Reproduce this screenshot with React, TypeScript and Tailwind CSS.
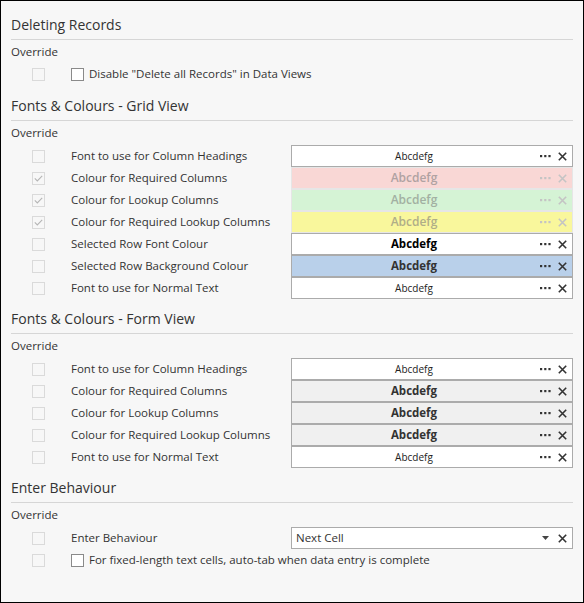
import React from "react";

const FONT = { fontFamily: '"Segoe UI", "Open Sans", "Noto Sans", sans-serif' };

function Check({ checked = false, enabled = false }: { checked?: boolean; enabled?: boolean }) {
  return (
    <div
      className={
        "w-[13px] h-[13px] shrink-0 border flex items-center justify-center " +
        (enabled ? "border-[#8a8a8a] bg-white" : "border-[#dadada] bg-[#f7f7f7]")
      }
    >
      {checked && (
        <svg width="9" height="7" viewBox="0 0 9 7">
          <path d="M0.8 3.4 L3.3 5.9 L8.2 0.8" fill="none" stroke="#b5b5b5" strokeWidth="1.1" />
        </svg>
      )}
    </div>
  );
}

function Dots({ faded }: { faded?: boolean }) {
  const c = faded ? "#c4c4c4" : "#333";
  return (
    <svg width="11" height="3" viewBox="0 0 11 3">
      <rect x="0" y="0" width="2.2" height="2.2" fill={c} />
      <rect x="4.2" y="0" width="2.2" height="2.2" fill={c} />
      <rect x="8.4" y="0" width="2.2" height="2.2" fill={c} />
    </svg>
  );
}

function XIcon({ faded }: { faded?: boolean }) {
  const c = faded ? "#c4c4c4" : "#333";
  return (
    <svg width="9" height="9" viewBox="0 0 9 9">
      <path d="M0.8 0.8 L8.2 8.2 M8.2 0.8 L0.8 8.2" stroke={c} strokeWidth="1.6" fill="none" />
    </svg>
  );
}

type Box = {
  bg: string;
  border: string;
  text: string;
  kind: "small" | "bold" | "faded";
  faded?: boolean;
};

function ValueBox({ b }: { b: Box }) {
  const textCls =
    b.kind === "small"
      ? "text-[10px] text-[#222]"
      : b.kind === "bold"
      ? "text-[11.5px] font-bold " + b.text
      : "text-[12px] font-semibold " + b.text;
  return (
    <div className={"flex-1 h-[22px] border flex items-center " + b.bg + " " + b.border}>
      <div className={"flex-1 text-center leading-none " + textCls} style={{ fontFamily: '"Segoe UI", "Open Sans", sans-serif' }}>
        Abcdefg
      </div>
      <div className="flex items-center gap-[7px] pr-[5px] pl-[4px]">
        <Dots faded={b.faded} />
        <XIcon faded={b.faded} />
      </div>
    </div>
  );
}

function Row({ label, checked, box }: { label: string; checked?: boolean; box: Box }) {
  return (
    <div className="flex items-center h-[22px]">
      <div className="w-[60px] pl-[21px] shrink-0">
        <Check checked={checked} />
      </div>
      <div className="w-[220px] shrink-0 text-[11.5px] text-[#333] leading-none">{label}</div>
      <ValueBox b={box} />
    </div>
  );
}

function Header({ title }: { title: string }) {
  return (
    <>
      <div className="text-[14px] text-[#333] h-[20px] leading-[20px]">{title}</div>
      <div className="h-px bg-[#d6d6d6] mt-[4px]" />
      <div className="text-[11.5px] text-[#333] h-[16px] leading-[16px] mt-[4px]">Override</div>
    </>
  );
}

const white: Box = { bg: "bg-white", border: "border-[#ababab]", text: "", kind: "small" };
const whiteBold: Box = { bg: "bg-white", border: "border-[#ababab]", text: "text-black", kind: "bold" };
const blueBold: Box = { bg: "bg-[#b9d0ea]", border: "border-[#ababab]", text: "text-[#333]", kind: "bold" };
const grayBold: Box = { bg: "bg-[#f0f0f0]", border: "border-[#ababab]", text: "text-[#333]", kind: "bold" };
const pink: Box = { bg: "bg-[#f9d7d5]", border: "border-[#e6e6e6]", text: "text-[#b0a2a2]", kind: "faded", faded: true };
const green: Box = { bg: "bg-[#d5f3d5]", border: "border-[#e6e6e6]", text: "text-[#a2b0a2]", kind: "faded", faded: true };
const yellow: Box = { bg: "bg-[#f9f79c]", border: "border-[#e6e6e6]", text: "text-[#b0ae88]", kind: "faded", faded: true };

export default function App() {
  return (
    <div className="w-[584px] h-[603px] border border-black bg-[#f7f7f7] px-[10px] pt-[14px] overflow-hidden" style={FONT}>
      {/* Deleting Records */}
      <Header title="Deleting Records" />
      <div className="flex items-center h-[22px] mt-[3px]">
        <div className="w-[60px] pl-[21px] shrink-0">
          <Check />
        </div>
        <Check enabled />
        <div className="ml-[5px] text-[11.5px] text-[#333] leading-none">Disable "Delete all Records" in Data Views</div>
      </div>

      {/* Grid View */}
      <div className="mt-[11px]">
        <Header title="Fonts & Colours - Grid View" />
        <div className="mt-[4px]">
          <Row label="Font to use for Column Headings" box={white} />
          <Row label="Colour for Required Columns" checked box={pink} />
          <Row label="Colour for Lookup Columns" checked box={green} />
          <Row label="Colour for Required Lookup Columns" checked box={yellow} />
          <Row label="Selected Row Font Colour" box={whiteBold} />
          <Row label="Selected Row Background Colour" box={blueBold} />
          <Row label="Font to use for Normal Text" box={white} />
        </div>
      </div>

      {/* Form View */}
      <div className="mt-[10px]">
        <Header title="Fonts & Colours - Form View" />
        <div className="mt-[4px]">
          <Row label="Font to use for Column Headings" box={white} />
          <Row label="Colour for Required Columns" box={grayBold} />
          <Row label="Colour for Lookup Columns" box={grayBold} />
          <Row label="Colour for Required Lookup Columns" box={grayBold} />
          <Row label="Font to use for Normal Text" box={white} />
        </div>
      </div>

      {/* Enter Behaviour */}
      <div className="mt-[10px]">
        <Header title="Enter Behaviour" />
        <div className="mt-[4px]">
          <div className="flex items-center h-[22px]">
            <div className="w-[60px] pl-[21px] shrink-0">
              <Check />
            </div>
            <div className="w-[220px] shrink-0 text-[11.5px] text-[#333] leading-none">Enter Behaviour</div>
            <div className="flex-1 h-[22px] border border-[#ababab] bg-white flex items-center">
              <div className="flex-1 pl-[4px] text-[11.5px] text-[#333] leading-none">Next Cell</div>
              <div className="flex items-center gap-[9px] pr-[5px]">
                <svg width="7" height="4" viewBox="0 0 7 4">
                  <path d="M0 0 L7 0 L3.5 4 Z" fill="#444" />
                </svg>
                <XIcon />
              </div>
            </div>
          </div>
          <div className="flex items-center h-[22px]">
            <div className="w-[60px] pl-[21px] shrink-0">
              <Check />
            </div>
            <Check enabled />
            <div className="ml-[5px] text-[11.5px] text-[#333] leading-none">
              For fixed-length text cells, auto-tab when data entry is complete
            </div>
          </div>
        </div>
      </div>
    </div>
  );
}
